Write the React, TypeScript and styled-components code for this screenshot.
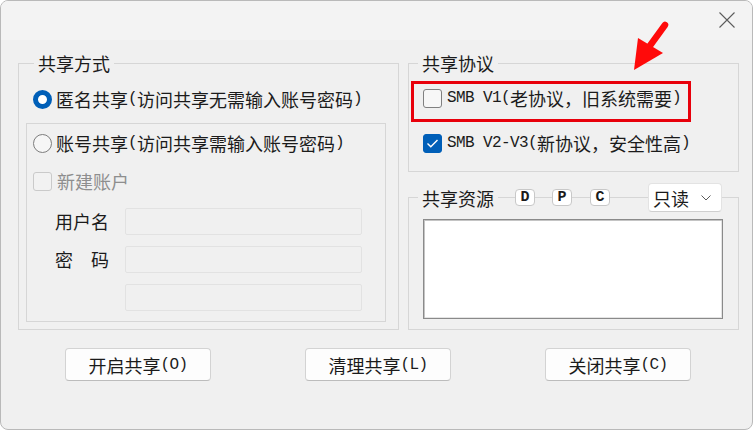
import React from "react";
import styled, { createGlobalStyle } from "styled-components";

const GlobalStyle = createGlobalStyle`
  html, body { margin: 0; padding: 0; background: #ffffff; }
  * { box-sizing: border-box; }
`;

const LINE = "#d6d6d6";
const ACCENT = "#005fb8";

const Window = styled.div`
  position: relative;
  width: 753px;
  height: 430px;
  border: 1px solid #b9b9b9;
  border-radius: 8px;
  background: #f0f0f0;
  overflow: hidden;
  display: flex;
  flex-direction: column;
  font-family: "Noto Sans CJK SC", "Liberation Sans", sans-serif;
  font-size: 18px;
  color: #1b1b1b;
`;

const TitleBar = styled.div`
  height: 39px;
  flex-shrink: 0;
  background: #f3f3f3;
  display: flex;
  justify-content: flex-end;
  align-items: flex-start;
  padding: 11px 17px 0 0;
`;

const Content = styled.div`
  height: 290px;
  flex-shrink: 0;
  display: flex;
  gap: 9px;
  padding: 10px 13px 0 17px;
`;

const Group = styled.fieldset<{ $w?: number; $h?: number; $pad: string }>`
  margin: 0;
  min-width: 0;
  border: 1px solid ${LINE};
  padding: ${(p) => p.$pad};
  display: flex;
  flex-direction: column;
  ${(p) => (p.$w ? `width: ${p.$w}px;` : "")}
  ${(p) => (p.$h ? `height: ${p.$h}px; flex-shrink: 0;` : "")}
`;

const Legend = styled.legend<{ $ml: number }>`
  margin-left: ${(p) => p.$ml}px;
  padding: 0 4px;
  line-height: 26px;
  font-size: 18px;
`;

const Mono = styled.span`
  font-family: "Liberation Mono", monospace;
  font-size: 16px;
  letter-spacing: -0.6px;
`;

const OptionRow = styled.div<{ $pl?: number; $mt?: number; $disabled?: boolean }>`
  display: flex;
  align-items: center;
  height: 26px;
  line-height: 26px;
  white-space: nowrap;
  padding-left: ${(p) => p.$pl ?? 0}px;
  margin-top: ${(p) => p.$mt ?? 0}px;
  color: ${(p) => (p.$disabled ? "#8e8e8e" : "#1b1b1b")};
`;

const Radio = styled.span<{ $on?: boolean }>`
  width: 19px;
  height: 19px;
  border-radius: 50%;
  flex-shrink: 0;
  margin-right: 4px;
  background: ${(p) => (p.$on ? "#ffffff" : "#f6f6f6")};
  border: ${(p) => (p.$on ? `5px solid ${ACCENT}` : "1px solid #7d7d7d")};
`;

const Check = styled.span<{ $on?: boolean; $disabled?: boolean }>`
  width: 19px;
  height: 19px;
  border-radius: 3px;
  flex-shrink: 0;
  margin-right: 5px;
  display: flex;
  align-items: center;
  justify-content: center;
  background: ${(p) => (p.$on ? ACCENT : p.$disabled ? "#f2f2f2" : "#f7f7f7")};
  border: 1px solid ${(p) => (p.$on ? ACCENT : p.$disabled ? "#cacaca" : "#808080")};
`;

const InnerPanel = styled.div`
  flex: 1;
  margin-top: 11px;
  border: 1px solid ${LINE};
  padding: 6px 10px 10px 6px;
  display: flex;
  flex-direction: column;
`;

const FormGrid = styled.div`
  display: grid;
  grid-template-columns: 70px 237px;
  grid-auto-rows: 27px;
  row-gap: 11px;
  margin-top: 14px;
  margin-left: 22px;
`;

const FieldLabel = styled.span`
  line-height: 27px;
  white-space: pre;
`;

const TextBox = styled.div<{ $col?: number }>`
  grid-column: ${(p) => p.$col ?? "auto"};
  background: #f0f0f0;
  border: 1px solid #e2e2e2;
  border-radius: 2px;
`;

const RightColumn = styled.div`
  width: 331px;
  display: flex;
  flex-direction: column;
  gap: 11px;
`;

const Highlight = styled.div`
  width: 280px;
  height: 41px;
  margin-left: 2px;
  border: 3px solid #e8000b;
  padding: 1px 0 0 9px;
`;

const ResGroup = styled.div`
  flex: 1;
  display: flex;
  flex-direction: column;
`;

const ResHeader = styled.div`
  height: 29px;
  display: flex;
  align-items: center;
`;

const Corner = styled.span<{ $side: "left" | "right" }>`
  align-self: flex-end;
  height: 15px;
  flex-shrink: 0;
  border-top: 1px solid ${LINE};
  ${(p) =>
    p.$side === "left"
      ? `width: 10px; border-left: 1px solid ${LINE};`
      : `width: 17px; border-right: 1px solid ${LINE};`}
`;

const HeaderLabel = styled.span`
  padding: 0 4px;
  line-height: 26px;
  white-space: nowrap;
`;

const Seg = styled.span<{ $w?: number }>`
  height: 1px;
  background: ${LINE};
  ${(p) => (p.$w ? `width: ${p.$w}px;` : "flex: 1;")}
`;

const Badge = styled.span`
  width: 20px;
  height: 17px;
  border: 1px solid #c8c8c8;
  border-radius: 4px;
  background: #ffffff;
  display: flex;
  align-items: center;
  justify-content: center;
  font-family: "Liberation Mono", monospace;
  font-weight: bold;
  font-size: 15px;
  color: #1b1b1b;
`;

const Select = styled.div`
  width: 74px;
  height: 29px;
  flex-shrink: 0;
  background: #ffffff;
  border: 1px solid #e3e3e3;
  border-bottom-color: #cfcfcf;
  border-radius: 4px;
  display: flex;
  align-items: center;
  padding: 0 10px 0 4px;
  line-height: 26px;
  justify-content: space-between;
`;

const ResBody = styled.div`
  flex: 1;
  border: 1px solid ${LINE};
  border-top: none;
  padding: 7px 15px 10px 14px;
  display: flex;
`;

const TextArea = styled.div`
  flex: 1;
  background: #ffffff;
  border: 1px solid #8a8a8a;
  box-shadow: inset 1px 1px 0 #c4c4c4, inset -1px -1px 0 #e4e4e4;
`;

const ButtonRow = styled.div`
  display: flex;
  gap: 94px;
  margin-top: 18px;
  padding-left: 64px;
`;

const Button = styled.div`
  width: 146px;
  height: 33px;
  background: #fdfdfd;
  border: 1px solid #d3d3d3;
  border-bottom-color: #bcbcbc;
  border-radius: 4px;
  display: flex;
  align-items: center;
  justify-content: center;
  line-height: 26px;
  white-space: nowrap;
`;

const Arrow = styled.svg`
  position: absolute;
  left: 627px;
  top: 19px;
`;

const CloseIcon = () => (
  <svg width="16" height="16" viewBox="0 0 16 16">
    <path d="M0.5 0.5 L15.5 15.5 M15.5 0.5 L0.5 15.5" stroke="#5c5c5c" strokeWidth="1.1" fill="none" />
  </svg>
);

const Tick = () => (
  <svg width="13" height="11" viewBox="0 0 13 11">
    <polyline points="1.5,5.5 4.8,8.8 11.5,2" stroke="#ffffff" strokeWidth="1.4" fill="none" />
  </svg>
);

const Chevron = () => (
  <svg width="10" height="6" viewBox="0 0 10 6">
    <polyline points="0.5,0.5 5,5 9.5,0.5" stroke="#5a5a5a" strokeWidth="1" fill="none" />
  </svg>
);

export default function App() {
  return (
    <>
      <GlobalStyle />
      <Window>
        <TitleBar>
          <CloseIcon />
        </TitleBar>
        <Content>
          <Group $w={381} $pad="10px 12px 7px 7px">
            <Legend $ml={8}>共享方式</Legend>
            <OptionRow $pl={7}>
              <Radio $on />
              匿名共享<Mono>(</Mono>访问共享无需输入账号密码<Mono>)</Mono>
            </OptionRow>
            <InnerPanel>
              <OptionRow>
                <Radio />
                账号共享<Mono>(</Mono>访问共享需输入账号密码<Mono>)</Mono>
              </OptionRow>
              <OptionRow $mt={12} $disabled>
                <Check $disabled />
                新建账户
              </OptionRow>
              <FormGrid>
                <FieldLabel>用户名</FieldLabel>
                <TextBox />
                <FieldLabel>密　码</FieldLabel>
                <TextBox />
                <TextBox $col={2} />
              </FormGrid>
            </InnerPanel>
          </Group>
          <RightColumn>
            <Group $h={122} $pad="5px 0 0 0">
              <Legend $ml={9}>共享协议</Legend>
              <Highlight>
                <OptionRow>
                  <Check />
                  <Mono>SMB V1(</Mono>老协议，旧系统需要<Mono>)</Mono>
                </OptionRow>
              </Highlight>
              <OptionRow $pl={14} $mt={8}>
                <Check $on>
                  <Tick />
                </Check>
                <Mono>SMB V2-V3(</Mono>新协议，安全性高<Mono>)</Mono>
              </OptionRow>
            </Group>
            <ResGroup>
              <ResHeader>
                <Corner $side="left" />
                <HeaderLabel>共享资源</HeaderLabel>
                <Seg $w={17} />
                <Badge>D</Badge>
                <Seg $w={17} />
                <Badge>P</Badge>
                <Seg $w={18} />
                <Badge>C</Badge>
                <Seg />
                <Select>
                  <span>只读</span>
                  <Chevron />
                </Select>
                <Corner $side="right" />
              </ResHeader>
              <ResBody>
                <TextArea />
              </ResBody>
            </ResGroup>
          </RightColumn>
        </Content>
        <ButtonRow>
          <Button>
            开启共享<Mono>(O)</Mono>
          </Button>
          <Button>
            清理共享<Mono>(L)</Mono>
          </Button>
          <Button>
            关闭共享<Mono>(C)</Mono>
          </Button>
        </ButtonRow>
        <Arrow width="44" height="54" viewBox="0 0 44 54">
          <line x1="37" y1="5" x2="21" y2="27" stroke="#ff0a0a" strokeWidth="6.5" strokeLinecap="round" />
          <polygon points="6,50 10,18 35,33" fill="#ff0a0a" />
        </Arrow>
      </Window>
    </>
  );
}
